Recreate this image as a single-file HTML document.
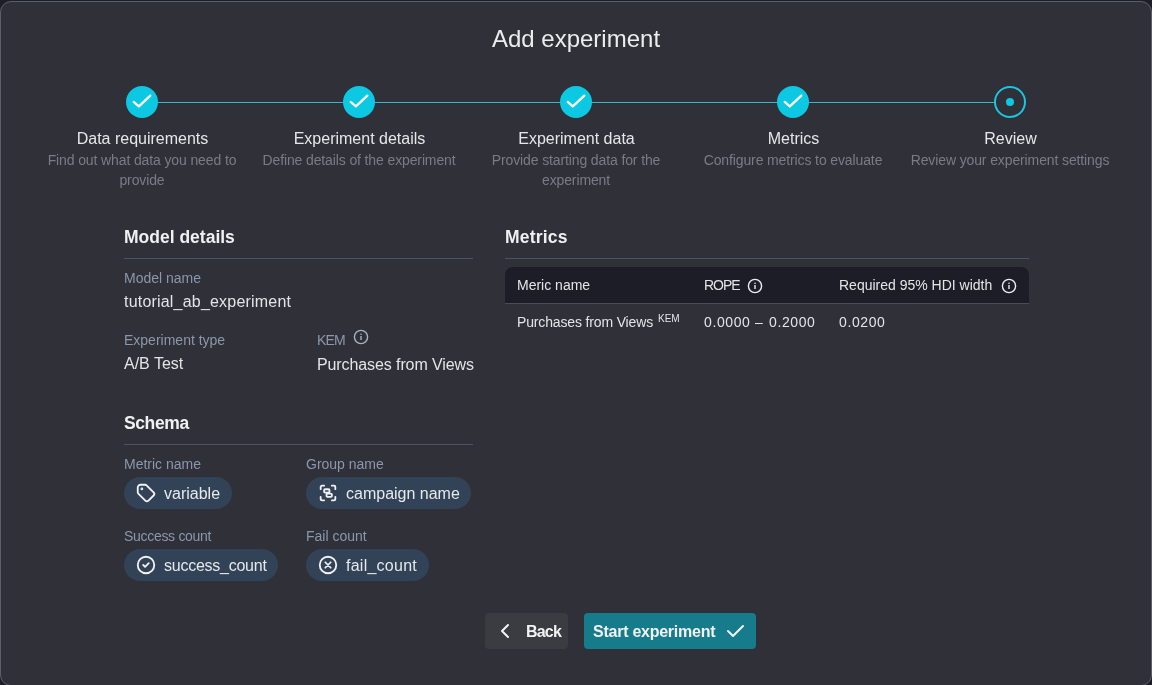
<!DOCTYPE html>
<html><head><meta charset="utf-8">
<style>
*{box-sizing:border-box;margin:0;padding:0}
html,body{width:1152px;height:685px;overflow:hidden;background:#1c1d25}
body{font-family:"Liberation Sans",sans-serif;position:relative;-webkit-font-smoothing:antialiased}
.t,.st,.ss,.chip span{will-change:transform}
.dlg{position:absolute;left:0;top:1px;width:1152px;height:685px;background:#2f3038;border:1px solid #5a5f6c;border-radius:11px}
.t{position:absolute;white-space:nowrap;line-height:1}
.title{font-size:24px;color:#ececef;left:0;width:1152px;text-align:center;top:27px}
.line{position:absolute;top:102px;height:1px;left:158px;width:836px;background:#5aa8b8;box-shadow:0 1px 0 #0e3b49}
.circ{position:absolute;top:86px;width:32px;height:32px;border-radius:50%;background:#0cc8e3}
.circ svg{position:absolute;left:0;top:0}
.cur{background:#2f3038;border:2px solid #1cc6e0}
.cur::after{content:"";position:absolute;left:10px;top:10px;width:8px;height:8px;border-radius:50%;background:#0cc8e3}
.st{position:absolute;width:217px;text-align:center;top:129px;font-size:16px;color:#e6e6ea;line-height:20px}
.ss{position:absolute;width:230px;text-align:center;top:150px;font-size:14px;color:#7a7c84;line-height:20px;letter-spacing:-0.12px}
.h{font-size:17.5px;font-weight:bold;color:#f0f0f2}
.div{position:absolute;height:1px;background:#4b5261}
.lbl{font-size:14px;color:#8b97ab}
.val{font-size:16px;color:#e4e4e8}
.chip{position:absolute;height:32px;border-radius:16px;background:#324357;color:#e6e8ec;font-size:16px}
.chip svg{position:absolute;top:5px}
.chip span{position:absolute;top:8.5px;line-height:1;white-space:nowrap}
.thead{position:absolute;left:505px;top:267px;width:524px;height:37px;background:#1d1d27;border-radius:8px 8px 0 0;border-bottom:1px solid #4a4d57}
.th{font-size:14px;color:#e4e4e8}
.btn{position:absolute;top:613px;height:36px;border-radius:4px}
</style></head><body>
<div class="dlg"></div>
<div class="t title">Add experiment</div>

<div class="line"></div>
<div class="circ" style="left:126px"><svg width="32" height="32" viewBox="0 0 32 32"><path d="M7.7 15.9 L12.85 20.3 L24.3 9.6" fill="none" stroke="#fff" stroke-width="2.3" stroke-linecap="round" stroke-linejoin="round"/></svg></div>
<div class="circ" style="left:343px"><svg width="32" height="32" viewBox="0 0 32 32"><path d="M7.7 15.9 L12.85 20.3 L24.3 9.6" fill="none" stroke="#fff" stroke-width="2.3" stroke-linecap="round" stroke-linejoin="round"/></svg></div>
<div class="circ" style="left:560px"><svg width="32" height="32" viewBox="0 0 32 32"><path d="M7.7 15.9 L12.85 20.3 L24.3 9.6" fill="none" stroke="#fff" stroke-width="2.3" stroke-linecap="round" stroke-linejoin="round"/></svg></div>
<div class="circ" style="left:777px"><svg width="32" height="32" viewBox="0 0 32 32"><path d="M7.7 15.9 L12.85 20.3 L24.3 9.6" fill="none" stroke="#fff" stroke-width="2.3" stroke-linecap="round" stroke-linejoin="round"/></svg></div>
<div class="circ cur" style="left:994px"></div>

<div class="st" style="left:33.5px">Data requirements</div>
<div class="st" style="left:250.5px">Experiment details</div>
<div class="st" style="left:467.5px">Experiment data</div>
<div class="st" style="left:684.5px">Metrics</div>
<div class="st" style="left:901.5px">Review</div>
<div class="ss" style="left:27px">Find out what data you need to<br>provide</div>
<div class="ss" style="left:244px">Define details of the experiment</div>
<div class="ss" style="left:461px">Provide starting data for the<br>experiment</div>
<div class="ss" style="left:678px">Configure metrics to evaluate</div>
<div class="ss" style="left:895px">Review your experiment settings</div>

<!-- Model details -->
<div class="t h" style="left:124px;top:229px">Model details</div>
<div class="div" style="left:124px;top:258px;width:349px"></div>
<div class="t lbl" style="left:124px;top:271px">Model name</div>
<div class="t val" style="left:124px;top:294px;letter-spacing:0.2px">tutorial_ab_experiment</div>
<div class="t lbl" style="left:124px;top:333px">Experiment type</div>
<div class="t val" style="left:124px;top:356px">A/B Test</div>
<div class="t lbl" style="left:317px;top:333px;letter-spacing:-0.8px">KEM</div>
<svg style="position:absolute;left:353px;top:329px" width="16" height="16" viewBox="0 0 16 16"><circle cx="8" cy="8" r="6.6" fill="none" stroke="#a9b1bf" stroke-width="1.4"/><rect x="7.3" y="7" width="1.4" height="4" fill="#a9b1bf"/><circle cx="8" cy="5.2" r="0.8" fill="#a9b1bf"/></svg>
<div class="t val" style="left:317px;top:356.8px;letter-spacing:-0.1px">Purchases from Views</div>

<!-- Schema -->
<div class="t h" style="left:124px;top:415px;letter-spacing:-0.4px">Schema</div>
<div class="div" style="left:124px;top:444px;width:349px"></div>
<div class="t lbl" style="left:124px;top:457px">Metric name</div>
<div class="t lbl" style="left:306px;top:457px">Group name</div>
<div class="t lbl" style="left:124px;top:528.5px;letter-spacing:-0.3px">Success count</div>
<div class="t lbl" style="left:306px;top:528.5px">Fail count</div>

<div class="chip" style="left:124px;top:477px;width:108px">
<svg style="left:11px" width="22" height="22" viewBox="0 0 24 24" fill="none" stroke="#f2f2f4" stroke-width="2" stroke-linecap="round" stroke-linejoin="round"><circle cx="7.5" cy="7.5" r=".5" fill="#f2f2f4"/><path d="M3 6v5.172a2 2 0 0 0 .586 1.414l7.71 7.71a2.41 2.41 0 0 0 3.408 0l5.592 -5.592a2.41 2.41 0 0 0 0 -3.408l-7.71 -7.71a2 2 0 0 0 -1.414 -.586h-5.172a3 3 0 0 0 -3 3z"/></svg>
<span style="left:40px">variable</span></div>
<div class="chip" style="left:306px;top:477px;width:165px">
<svg style="left:11px" width="22" height="22" viewBox="0 0 24 24" fill="none" stroke="#f2f2f4" stroke-width="2" stroke-linecap="round" stroke-linejoin="round"><path d="M4 7.8V5.5a1.5 1.5 0 0 1 1.5 -1.5H7.8M16.2 4H18.5a1.5 1.5 0 0 1 1.5 1.5V7.8M4 16.2V18.5a1.5 1.5 0 0 0 1.5 1.5H7.8M16.2 20H18.5a1.5 1.5 0 0 0 1.5 -1.5V16.2"/><rect x="7.8" y="7.9" width="5.8" height="3.6" rx="1"/><rect x="10.4" y="12.7" width="5.8" height="3.6" rx="1"/></svg>
<span style="left:40px">campaign name</span></div>
<div class="chip" style="left:124px;top:549px;width:154px">
<svg style="left:11px" width="22" height="22" viewBox="0 0 24 24" fill="none" stroke="#f2f2f4" stroke-width="2" stroke-linecap="round" stroke-linejoin="round"><circle cx="12" cy="12" r="9"/><path d="M9 12l2 2l4 -4"/></svg>
<span style="left:40px;letter-spacing:-0.25px">success_count</span></div>
<div class="chip" style="left:306px;top:549px;width:123px">
<svg style="left:11px" width="22" height="22" viewBox="0 0 24 24" fill="none" stroke="#f2f2f4" stroke-width="2" stroke-linecap="round" stroke-linejoin="round"><circle cx="12" cy="12" r="9"/><path d="M9 9l6 6M15 9l-6 6" stroke-width="1.9"/></svg>
<span style="left:40px;letter-spacing:0.25px">fail_count</span></div>

<!-- Metrics -->
<div class="t h" style="left:505px;top:229px;letter-spacing:0.2px">Metrics</div>
<div class="div" style="left:505px;top:258px;width:524px"></div>
<div class="thead"></div>
<div class="t th" style="left:517px;top:277.6px">Meric name</div>
<div class="t th" style="left:704px;top:277.6px;letter-spacing:-1px">ROPE</div>
<svg style="position:absolute;left:747px;top:278px" width="16" height="16" viewBox="0 0 16 16"><circle cx="8" cy="8" r="6.6" fill="none" stroke="#eceef2" stroke-width="1.4"/><rect x="7.3" y="7" width="1.4" height="4" fill="#eceef2"/><circle cx="8" cy="5.2" r="0.8" fill="#eceef2"/></svg>
<div class="t th" style="left:839px;top:277.6px">Required 95% HDI width</div>
<svg style="position:absolute;left:1001px;top:278px" width="16" height="16" viewBox="0 0 16 16"><circle cx="8" cy="8" r="6.6" fill="none" stroke="#eceef2" stroke-width="1.4"/><rect x="7.3" y="7" width="1.4" height="4" fill="#eceef2"/><circle cx="8" cy="5.2" r="0.8" fill="#eceef2"/></svg>
<div class="t th" style="left:517px;top:315px;letter-spacing:-0.15px">Purchases from Views</div>
<div class="t" style="left:658px;top:313.5px;font-size:10px;color:#e4e4e8">KEM</div>
<div class="t th" style="left:703.5px;top:315px;letter-spacing:0.6px">0.0000</div>
<div class="t th" style="left:755px;top:315px">&ndash;</div>
<div class="t th" style="left:769px;top:315px;letter-spacing:0.6px">0.2000</div>
<div class="t th" style="left:838.5px;top:315px;letter-spacing:0.6px">0.0200</div>

<!-- Buttons -->
<div class="btn" style="left:485px;width:83px;background:#3b3c42">
<svg style="position:absolute;left:8px;top:6px" width="24" height="24" viewBox="0 0 24 24" fill="none" stroke="#f4f4f6" stroke-width="2" stroke-linecap="round" stroke-linejoin="round"><path d="M15 6l-6 6l6 6"/></svg>
<div class="t" style="left:41px;top:11px;font-size:16px;font-weight:bold;color:#f2f2f4;letter-spacing:-0.8px">Back</div></div>
<div class="btn" style="left:584px;width:172px;background:#167b8b">
<div class="t" style="left:8.5px;top:11px;font-size:16px;font-weight:bold;color:#f2f2f4;letter-spacing:-0.25px">Start experiment</div>
<svg style="position:absolute;left:139px;top:6px" width="24" height="24" viewBox="0 0 24 24" fill="none" stroke="#f4f4f6" stroke-width="2" stroke-linecap="round" stroke-linejoin="round"><path d="M5 12l5 5l10 -10"/></svg></div>
</body></html>
